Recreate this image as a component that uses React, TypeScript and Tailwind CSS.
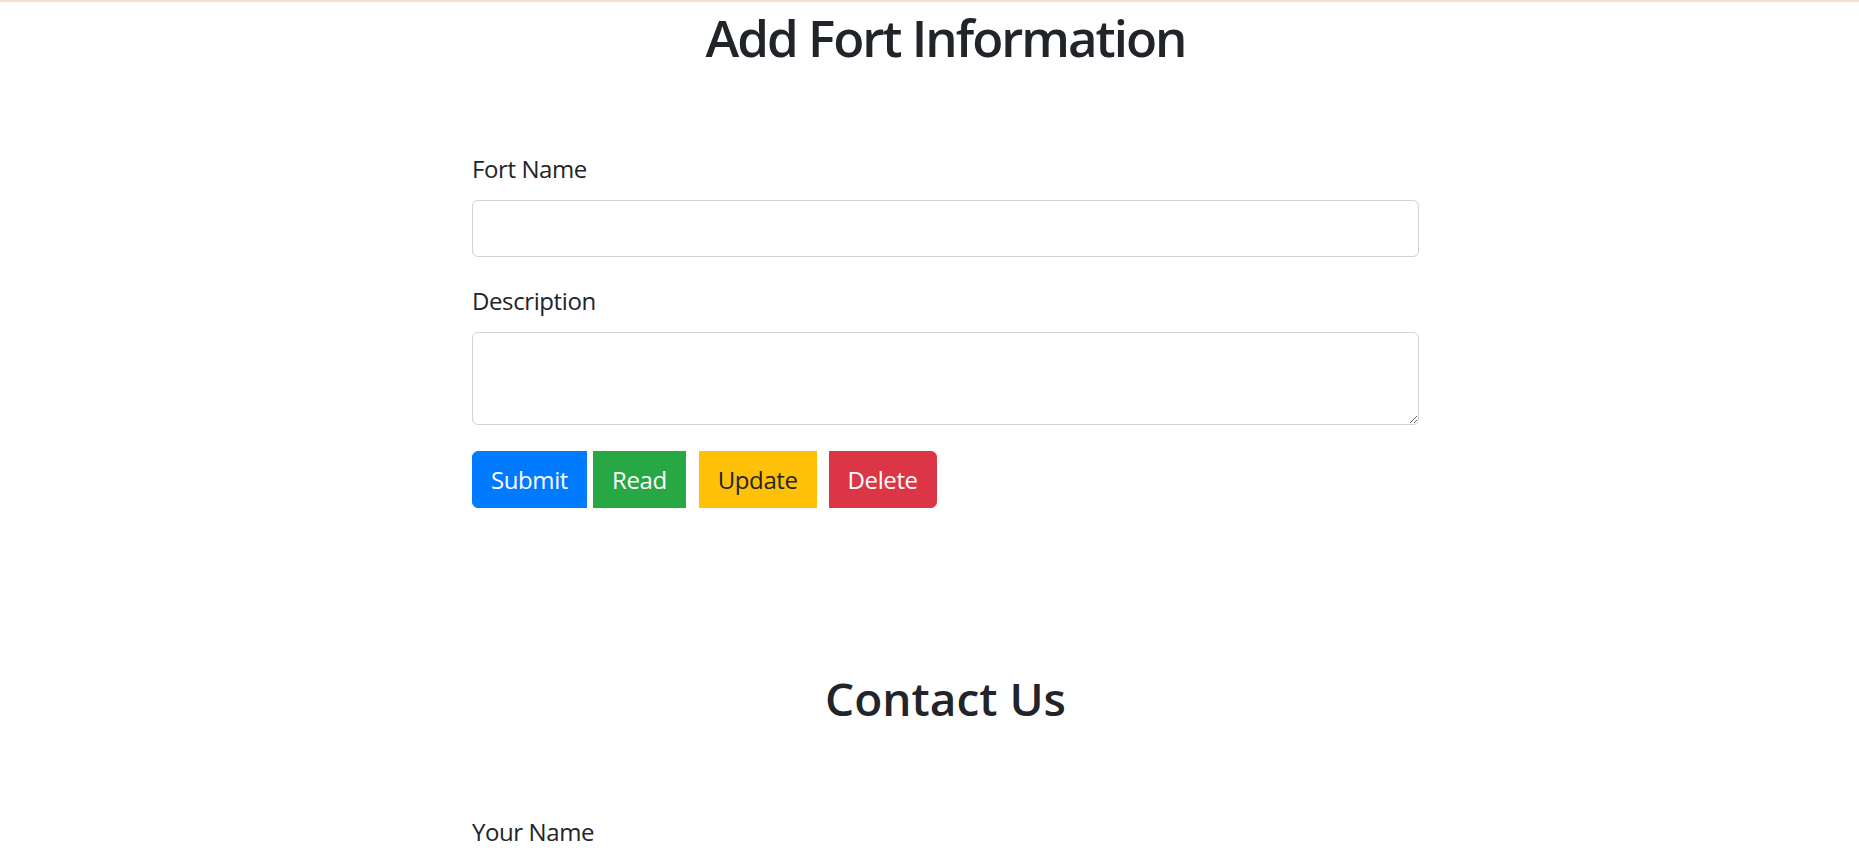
import { useState } from 'react';

const font = { fontFamily: '"Open Sans", "Noto Sans", sans-serif' };

export default function App() {
  const [fortName, setFortName] = useState('');
  const [description, setDescription] = useState('');
  const [yourName, setYourName] = useState('');

  return (
    <div className="min-h-screen bg-white text-[#212529]" style={font}>
      <div className="h-[2px] bg-[#f5e0d2]" />
      <div className="flex justify-center pl-[32px]">
        <div className="w-[947px]">
          <h1 className="text-center text-[51px] leading-[70px] font-semibold tracking-[-2px]">Add Fort Information</h1>

          <form className="mt-[79px]" onSubmit={e => e.preventDefault()}>
            <div className="mb-[26px]">
              <label className="block text-[24px] leading-[36px] tracking-[-0.4px] mb-[13px]">Fort Name</label>
              <input
                type="text"
                value={fortName}
                onChange={e => setFortName(e.target.value)}
                className="block w-full h-[57px] border border-[#ced4da] rounded-[6px] px-[18px] text-[24px] focus:outline-none"
              />
            </div>
            <div className="mb-[26px]">
              <label className="block text-[24px] leading-[36px] tracking-[-0.4px] mb-[13px]">Description</label>
              <textarea
                rows={2}
                value={description}
                onChange={e => setDescription(e.target.value)}
                className="block w-full h-[93px] border border-[#ced4da] rounded-[6px] px-[18px] py-[9px] text-[24px] leading-[36px] focus:outline-none"
              />
            </div>
            <div className="flex items-center text-[24px] leading-[36px] tracking-[-0.4px]">
              <button type="submit" className="h-[57px] px-[18px] text-white bg-[#007bff] border border-[#007bff] rounded-l-[6px]">
                Submit
              </button>
              <button type="button" className="ml-[6px] h-[57px] px-[18px] text-white bg-[#28a745] border border-[#28a745]">
                Read
              </button>
              <button type="button" className="ml-[13px] h-[57px] px-[18px] text-[#212529] bg-[#ffc107] border border-[#ffc107]">
                Update
              </button>
              <button type="button" className="ml-[12px] h-[57px] px-[18px] text-white bg-[#dc3545] border border-[#dc3545] rounded-r-[6px]">
                Delete
              </button>
            </div>
          </form>

          <h2 className="mt-[160px] text-center text-[46px] leading-[60px] font-semibold">Contact Us</h2>

          <div className="mt-[86px]">
            <label className="block text-[24px] leading-[36px] tracking-[-0.4px] mb-[13px]">Your Name</label>
            <input
              type="text"
              value={yourName}
              onChange={e => setYourName(e.target.value)}
              className="block w-full h-[57px] border border-[#ced4da] rounded-[6px] px-[18px] text-[24px] focus:outline-none"
            />
          </div>
        </div>
      </div>
    </div>
  );
}
